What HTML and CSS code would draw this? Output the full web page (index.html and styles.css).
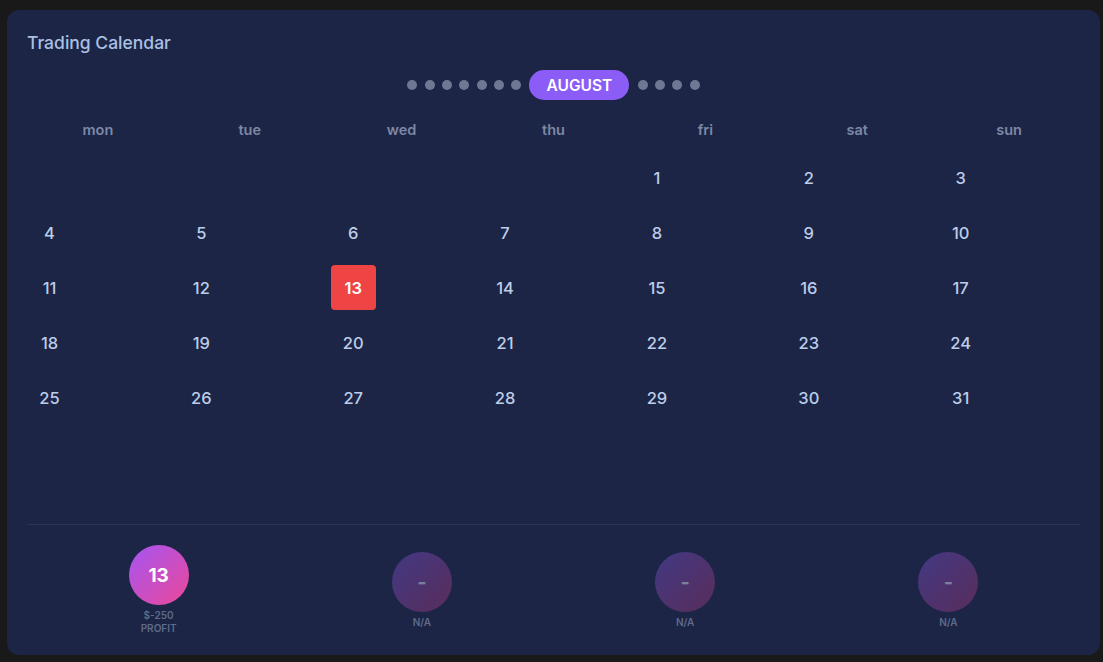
FILE: index.html
```html
<!DOCTYPE html>
<html>
<head>
<meta charset="utf-8">
<link rel="stylesheet" href="styles.css">
</head>
<body>
<div class="card">
  <h1 class="title">Trading Calendar</h1>
  <div class="months">
    <span class="dot"></span><span class="dot"></span><span class="dot"></span><span class="dot"></span><span class="dot"></span><span class="dot"></span><span class="dot"></span>
    <span class="pill">AUGUST</span>
    <span class="dot"></span><span class="dot"></span><span class="dot"></span><span class="dot"></span>
  </div>
  <div class="calendar">
    <div class="weekdays">
      <div>mon</div><div>tue</div><div>wed</div><div>thu</div><div>fri</div><div>sat</div><div>sun</div>
    </div>
    <div class="days">
      <div class="day empty"></div><div class="day empty"></div><div class="day empty"></div><div class="day empty"></div>
      <div class="day"><span>1</span></div><div class="day"><span>2</span></div><div class="day"><span>3</span></div>
      <div class="day"><span>4</span></div><div class="day"><span>5</span></div><div class="day"><span>6</span></div><div class="day"><span>7</span></div><div class="day"><span>8</span></div><div class="day"><span>9</span></div><div class="day"><span>10</span></div>
      <div class="day"><span>11</span></div><div class="day"><span>12</span></div><div class="day"><span class="today">13</span></div><div class="day"><span>14</span></div><div class="day"><span>15</span></div><div class="day"><span>16</span></div><div class="day"><span>17</span></div>
      <div class="day"><span>18</span></div><div class="day"><span>19</span></div><div class="day"><span>20</span></div><div class="day"><span>21</span></div><div class="day"><span>22</span></div><div class="day"><span>23</span></div><div class="day"><span>24</span></div>
      <div class="day"><span>25</span></div><div class="day"><span>26</span></div><div class="day"><span>27</span></div><div class="day"><span>28</span></div><div class="day"><span>29</span></div><div class="day"><span>30</span></div><div class="day"><span>31</span></div>
    </div>
  </div>
  <div class="summary">
    <div class="stat">
      <div class="circle active">13</div>
      <div class="label">$-250</div>
      <div class="label">PROFIT</div>
    </div>
    <div class="stat">
      <div class="circle muted">-</div>
      <div class="label">N/A</div>
    </div>
    <div class="stat">
      <div class="circle muted">-</div>
      <div class="label">N/A</div>
    </div>
    <div class="stat">
      <div class="circle muted">-</div>
      <div class="label">N/A</div>
    </div>
  </div>
</div>
</body>
</html>
```
FILE: styles.css
```css
* { box-sizing: border-box; }
html, body { height: 100%; }
body {
  margin: 0;
  padding: 10px 3px 7px 7px;
  background: #191919;
  font-family: Inter, "Noto Sans", sans-serif;
}
.card {
  height: 645px;
  background: #1c2545;
  border-radius: 12px;
  padding: 20px 20px 0 20px;
  display: flex;
  flex-direction: column;
}
.title {
  margin: 0;
  font-size: 17.5px;
  line-height: 25px;
  font-weight: 500;
  color: #a9c0e4;
}
.months {
  margin-top: 15px;
  height: 30px;
  display: flex;
  align-items: center;
  justify-content: center;
  gap: 7.3px;
}
.dot {
  width: 10px;
  height: 10px;
  border-radius: 50%;
  background: #6f7893;
}
.pill {
  margin: 0 1px;
  width: 100px;
  height: 30px;
  border-radius: 15px;
  background: #8b5cf6;
  color: #ffffff;
  font-size: 15.5px;
  font-weight: 600;
  display: flex;
  align-items: center;
  justify-content: center;
}
.calendar {
  flex: 1;
  margin-top: 20px;
}
.weekdays {
  display: grid;
  grid-template-columns: repeat(7, 1fr);
  column-gap: 10px;
  text-align: center;
  font-size: 14.5px;
  line-height: 20px;
  font-weight: 600;
  color: #7c88a6;
}
.days {
  margin-top: 15px;
  display: grid;
  grid-template-columns: repeat(7, 1fr);
  column-gap: 10px;
  row-gap: 10px;
  grid-auto-rows: 45px;
}
.day span {
  width: 45px;
  height: 45px;
  display: flex;
  align-items: center;
  justify-content: center;
  font-size: 16.5px;
  font-weight: 500;
  color: #bccde9;
  border-radius: 4px;
}
.day span.today {
  background: #ef4444;
  color: #ffffff;
  font-weight: 600;
}
.summary {
  height: 131px;
  border-top: 1px solid #2a3454;
  display: grid;
  grid-template-columns: repeat(4, 1fr);
  align-items: center;
}
.stat {
  display: flex;
  flex-direction: column;
  align-items: center;
}
.circle {
  width: 60px;
  height: 60px;
  border-radius: 50%;
  display: flex;
  align-items: center;
  justify-content: center;
  margin-bottom: 4px;
  font-weight: 700;
}
.circle.active {
  background: linear-gradient(135deg, #a455f2, #ec4899);
  color: #ffffff;
  font-size: 19px;
}
.circle.muted {
  background: linear-gradient(135deg, rgba(139, 92, 246, 0.35), rgba(200, 60, 130, 0.35));
  color: #7a7f9c;
  font-size: 20px;
}
.label {
  font-size: 10px;
  line-height: 13px;
  font-weight: 600;
  color: #5f6b89;
}
```
